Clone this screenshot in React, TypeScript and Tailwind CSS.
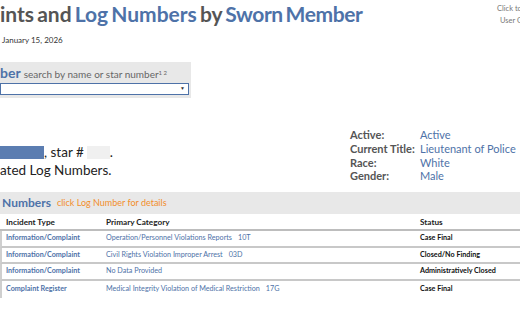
import React from 'react';

const rows = [
  { type: 'Information/Complaint', cat: 'Operation/Personnel Violations Reports', code: '10T', status: 'Case Final' },
  { type: 'Information/Complaint', cat: 'Civil Rights Violation Improper Arrest', code: '03D', status: 'Closed/No Finding' },
  { type: 'Information/Complaint', cat: 'No Data Provided', code: '', status: 'Administratively Closed' },
  { type: 'Complaint Register', cat: 'Medical Integrity Violation of Medical Restriction', code: '17G', status: 'Case Final' },
];

const info = [
  ['Active:', 'Active'],
  ['Current Title:', 'Lieutenant of Police'],
  ['Race:', 'White'],
  ['Gender:', 'Male'],
];

export default function App() {
  return (
    <div className="w-[520px] h-[330px] overflow-hidden bg-white relative font-['Lato',sans-serif]">
      {/* Header */}
      <div className="flex justify-between h-[62px]">
        <div className="flex flex-col">
          <h1 className="text-[21px] font-bold leading-[28px] whitespace-nowrap [word-spacing:-2px]">
            <span className="text-[#555555]">ints and </span>
            <span className="text-[#4e72a8]">Log Numbers</span>
            <span className="text-[#555555]"> by </span>
            <span className="text-[#4e72a8] tracking-[-0.4px]">Sworn Member</span>
          </h1>
          <p className="text-[8px] text-[#333] mt-[8px] leading-none pl-[2px] whitespace-nowrap">January 15, 2026</p>
        </div>
        <div className="text-[7.5px] text-[#777] leading-[12px] pt-[3px] whitespace-nowrap w-[23px]">
          <p>Click to</p>
          <p className="pl-[3px]">User G</p>
        </div>
      </div>

      {/* Filter */}
      <div className="w-[191px] h-[36px] bg-[#e8e8e8] pt-[2px]">
        <div className="flex items-baseline whitespace-nowrap leading-[18px]">
          <span className="text-[14px] font-bold text-[#4e72a8]">ber</span>
          <span className="text-[10px] text-[#666] ml-[3px]">search by name or star number<sup className="text-[6px]">1 2</sup></span>
        </div>
        <div className="w-[189px] h-[12px] bg-white border border-[#4e72a8] flex items-center justify-end pr-[3px]">
          <span className="text-[5px] text-[#333]">▼</span>
        </div>
      </div>

      {/* Member info */}
      <div className="flex mt-[29px] h-[65px]">
        <div className="w-[350px] pt-[16px] text-[13.5px] text-[#222] leading-[18px]">
          <div className="flex items-center">
            <span className="inline-block w-[44px] h-[13px] bg-[#5b7db1]"></span>
            <span>, star #</span>
            <span className="inline-block w-[23px] h-[13px] bg-[#f0f0f0] ml-[3px]"></span>
            <span>.</span>
          </div>
          <p className="whitespace-nowrap">ated Log Numbers.</p>
        </div>
        <div className="text-[11px] leading-[13.8px] pt-[1px]">
          {info.map(([k, v]) => (
            <div key={k} className="flex whitespace-nowrap">
              <span className="w-[70px] font-bold text-[#555]">{k}</span>
              <span className="text-[#4e72a8]">{v}</span>
            </div>
          ))}
        </div>
      </div>

      {/* Log numbers band */}
      <div className="bg-[#e8e8e8] h-[22px] flex items-center pl-[2px] whitespace-nowrap">
        <span className="text-[12px] font-bold text-[#4e72a8]">Numbers</span>
        <span className="text-[9px] text-[#f28e2b] ml-[6px]">click Log Number for details</span>
      </div>

      {/* Table */}
      <div className="text-[7.2px]">
        <div className="flex h-[16px] items-center font-bold text-[#222] border-b-2 border-[#bdbdbd] mt-[1px]">
          <span className="w-[106px] pl-[6px] text-[8.2px]">Incident Type</span>
          <span className="w-[314px] text-[8.2px]">Primary Category</span>
          <span className="text-[8.2px]">Status</span>
        </div>
        {rows.map((r, i) => (
          <div
            key={i}
            className={`flex h-[16.7px] items-center border-l-2 border-[#cfcfcf] whitespace-nowrap ${i < rows.length - 1 ? 'border-b-2 border-b-[#c8c8c8]' : ''}`}
          >
            <span className="w-[104px] pl-[4px] font-bold text-[#4e72a8]">{r.type}</span>
            <span className="w-[314px] text-[#4e72a8]">
              {r.cat}
              {r.code && <span className="ml-[6px]">{r.code}</span>}
            </span>
            <span className="font-bold text-[#111]">{r.status}</span>
          </div>
        ))}
      </div>
    </div>
  );
}
